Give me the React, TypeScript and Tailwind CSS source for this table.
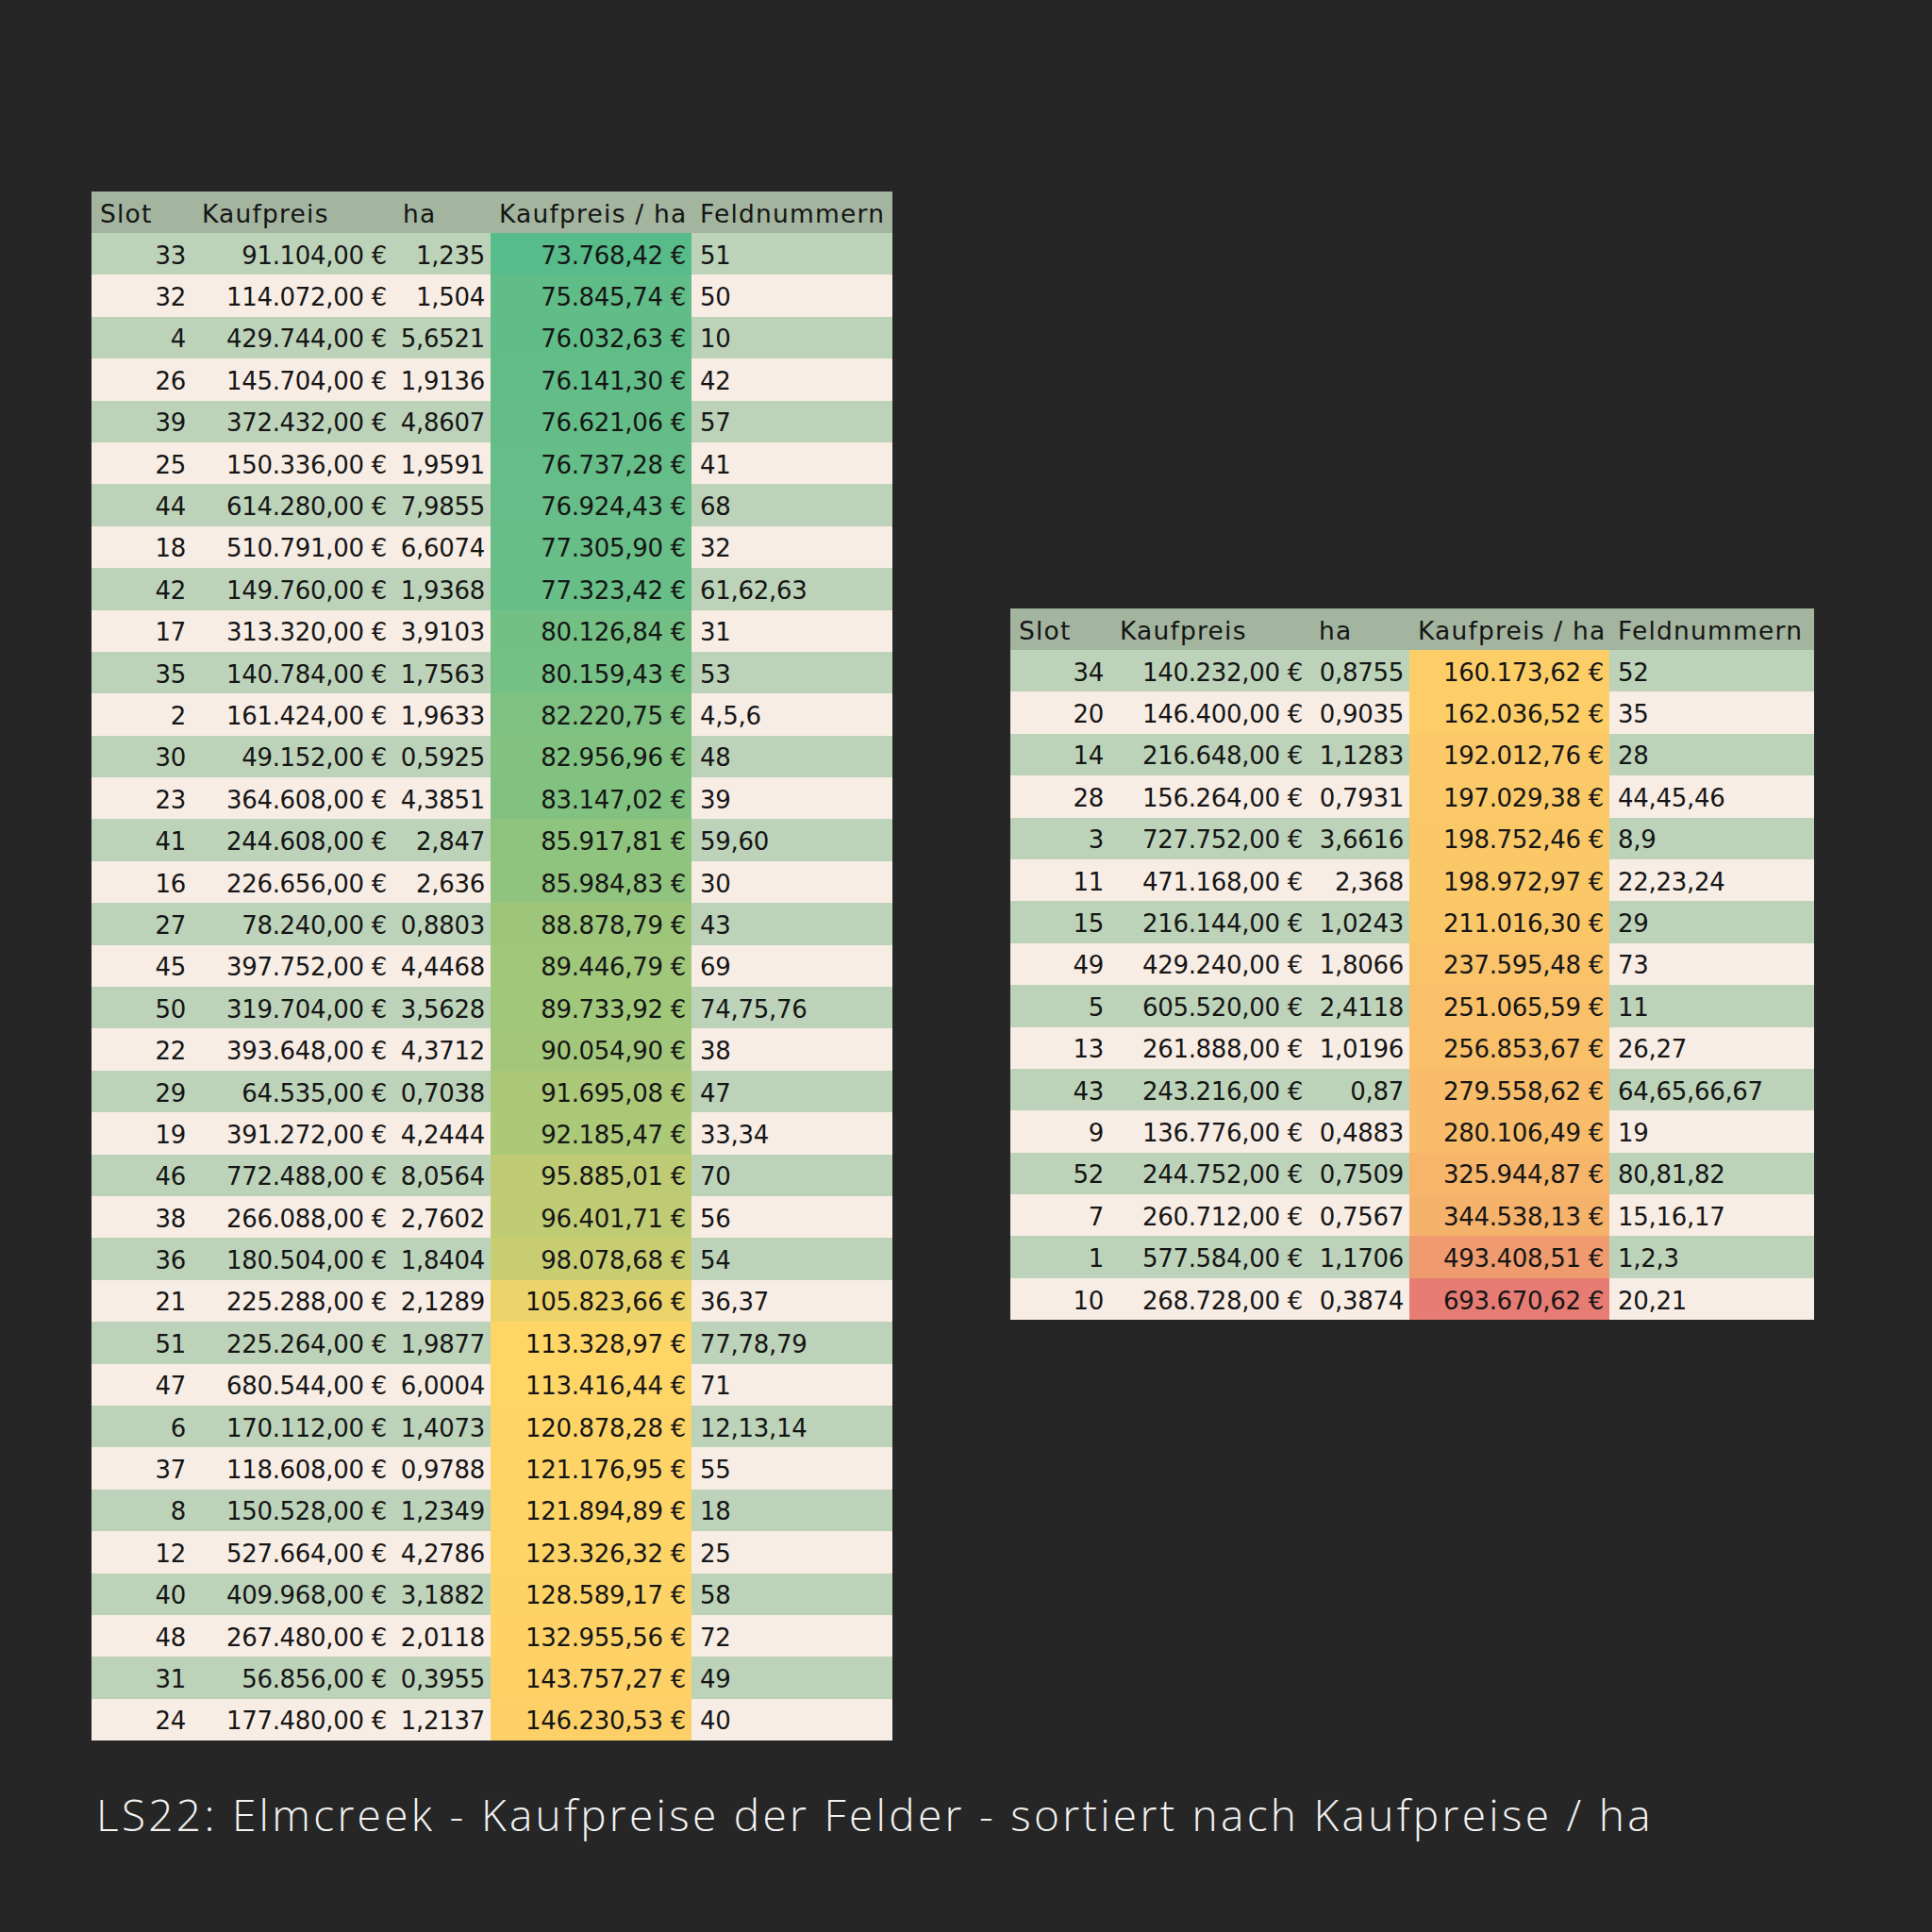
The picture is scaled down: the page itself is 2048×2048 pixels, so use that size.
import React from "react";

type Row = [string, string, string, string, string];

const leftRows: Row[] = [
  ["33", "91.104,00 €", "1,235", "73.768,42 €", "51"],
  ["32", "114.072,00 €", "1,504", "75.845,74 €", "50"],
  ["4", "429.744,00 €", "5,6521", "76.032,63 €", "10"],
  ["26", "145.704,00 €", "1,9136", "76.141,30 €", "42"],
  ["39", "372.432,00 €", "4,8607", "76.621,06 €", "57"],
  ["25", "150.336,00 €", "1,9591", "76.737,28 €", "41"],
  ["44", "614.280,00 €", "7,9855", "76.924,43 €", "68"],
  ["18", "510.791,00 €", "6,6074", "77.305,90 €", "32"],
  ["42", "149.760,00 €", "1,9368", "77.323,42 €", "61,62,63"],
  ["17", "313.320,00 €", "3,9103", "80.126,84 €", "31"],
  ["35", "140.784,00 €", "1,7563", "80.159,43 €", "53"],
  ["2", "161.424,00 €", "1,9633", "82.220,75 €", "4,5,6"],
  ["30", "49.152,00 €", "0,5925", "82.956,96 €", "48"],
  ["23", "364.608,00 €", "4,3851", "83.147,02 €", "39"],
  ["41", "244.608,00 €", "2,847", "85.917,81 €", "59,60"],
  ["16", "226.656,00 €", "2,636", "85.984,83 €", "30"],
  ["27", "78.240,00 €", "0,8803", "88.878,79 €", "43"],
  ["45", "397.752,00 €", "4,4468", "89.446,79 €", "69"],
  ["50", "319.704,00 €", "3,5628", "89.733,92 €", "74,75,76"],
  ["22", "393.648,00 €", "4,3712", "90.054,90 €", "38"],
  ["29", "64.535,00 €", "0,7038", "91.695,08 €", "47"],
  ["19", "391.272,00 €", "4,2444", "92.185,47 €", "33,34"],
  ["46", "772.488,00 €", "8,0564", "95.885,01 €", "70"],
  ["38", "266.088,00 €", "2,7602", "96.401,71 €", "56"],
  ["36", "180.504,00 €", "1,8404", "98.078,68 €", "54"],
  ["21", "225.288,00 €", "2,1289", "105.823,66 €", "36,37"],
  ["51", "225.264,00 €", "1,9877", "113.328,97 €", "77,78,79"],
  ["47", "680.544,00 €", "6,0004", "113.416,44 €", "71"],
  ["6", "170.112,00 €", "1,4073", "120.878,28 €", "12,13,14"],
  ["37", "118.608,00 €", "0,9788", "121.176,95 €", "55"],
  ["8", "150.528,00 €", "1,2349", "121.894,89 €", "18"],
  ["12", "527.664,00 €", "4,2786", "123.326,32 €", "25"],
  ["40", "409.968,00 €", "3,1882", "128.589,17 €", "58"],
  ["48", "267.480,00 €", "2,0118", "132.955,56 €", "72"],
  ["31", "56.856,00 €", "0,3955", "143.757,27 €", "49"],
  ["24", "177.480,00 €", "1,2137", "146.230,53 €", "40"],
];

const rightRows: Row[] = [
  ["34", "140.232,00 €", "0,8755", "160.173,62 €", "52"],
  ["20", "146.400,00 €", "0,9035", "162.036,52 €", "35"],
  ["14", "216.648,00 €", "1,1283", "192.012,76 €", "28"],
  ["28", "156.264,00 €", "0,7931", "197.029,38 €", "44,45,46"],
  ["3", "727.752,00 €", "3,6616", "198.752,46 €", "8,9"],
  ["11", "471.168,00 €", "2,368", "198.972,97 €", "22,23,24"],
  ["15", "216.144,00 €", "1,0243", "211.016,30 €", "29"],
  ["49", "429.240,00 €", "1,8066", "237.595,48 €", "73"],
  ["5", "605.520,00 €", "2,4118", "251.065,59 €", "11"],
  ["13", "261.888,00 €", "1,0196", "256.853,67 €", "26,27"],
  ["43", "243.216,00 €", "0,87", "279.558,62 €", "64,65,66,67"],
  ["9", "136.776,00 €", "0,4883", "280.106,49 €", "19"],
  ["52", "244.752,00 €", "0,7509", "325.944,87 €", "80,81,82"],
  ["7", "260.712,00 €", "0,7567", "344.538,13 €", "15,16,17"],
  ["1", "577.584,00 €", "1,1706", "493.408,51 €", "1,2,3"],
  ["10", "268.728,00 €", "0,3874", "693.670,62 €", "20,21"],
];

// sheets-style colour scale: green -> yellow -> red
const MIN = 73768.42;
const MID = 110000;
const MAX = 693670.62;
const green = [87, 187, 138];
const yellow = [255, 214, 102];
const red = [230, 124, 115];

const parse = (s: string) => parseFloat(s.replace(" €", "").replace(/\./g, "").replace(",", "."));

const mix = (a: number[], b: number[], t: number) =>
  `rgb(${a.map((v, i) => Math.round(v + (b[i] - v) * t)).join(",")})`;

const scaleColor = (s: string) => {
  const v = parse(s);
  if (v <= MID) return mix(green, yellow, Math.max(0, (v - MIN) / (MID - MIN)));
  return mix(yellow, red, Math.min(1, (v - MID) / (MAX - MID)));
};

const PriceTable = ({ rows, widths }: { rows: Row[]; widths: string[] }) => (
  <div className="flex flex-col shrink-0 text-[26px] text-[#151515] font-['DejaVu_Sans',sans-serif] tracking-[-0.3px]">
    <div className="flex h-[44px] bg-[#a3b49f] items-center pt-[3px] text-[26.5px] tracking-[1.2px]">
      <div className={`${widths[0]} pl-[9px]`}>Slot</div>
      <div className={`${widths[1]} pl-[9px]`}>Kaufpreis</div>
      <div className={`${widths[2]} pl-[9px]`}>ha</div>
      <div className={`${widths[3]} pl-[9px] whitespace-nowrap`}>Kaufpreis / ha</div>
      <div className={`${widths[4]} pl-[9px] whitespace-nowrap`}>Feldnummern</div>
    </div>
    {rows.map((r, i) => (
      <div key={i} className={`flex h-[44.4px] ${i % 2 === 0 ? "bg-[#bdd3b9]" : "bg-[#f8ede5]"}`}>
        <div className={`${widths[0]} flex items-center justify-end pr-[8px] pt-[4px]`}>{r[0]}</div>
        <div className={`${widths[1]} flex items-center justify-end pr-[8px] pt-[4px] whitespace-nowrap`}>{r[1]}</div>
        <div className={`${widths[2]} flex items-center justify-end pr-[6px] pt-[4px] whitespace-nowrap`}>{r[2]}</div>
        <div
          className={`${widths[3]} flex items-center justify-end pr-[6px] pt-[4px] whitespace-nowrap`}
          style={{ backgroundColor: scaleColor(r[3]) }}
        >
          {r[3]}
        </div>
        <div className={`${widths[4]} flex items-center pl-[9px] pt-[4px] whitespace-nowrap`}>{r[4]}</div>
      </div>
    ))}
  </div>
);

export default function App() {
  return (
    <div className="w-[2048px] h-[2048px] bg-[#262626] flex flex-col pl-[97px] pt-[203px]">
      <div className="flex gap-[125px] items-start">
        <PriceTable rows={leftRows} widths={["w-[108px]", "w-[213px]", "w-[102px]", "w-[213px]", "w-[213px]"]} />
        <div className="mt-[442px]">
          <PriceTable rows={rightRows} widths={["w-[107px]", "w-[211px]", "w-[105px]", "w-[212px]", "w-[217px]"]} />
        </div>
      </div>
      <div className="mt-[50px] ml-[5px] text-[46px] leading-[56px] font-light text-[#f2f2f2] font-['Open_Sans',sans-serif] tracking-[3.3px] whitespace-nowrap">
        LS22: Elmcreek - Kaufpreise der Felder - sortiert nach Kaufpreise / ha
      </div>
    </div>
  );
}
